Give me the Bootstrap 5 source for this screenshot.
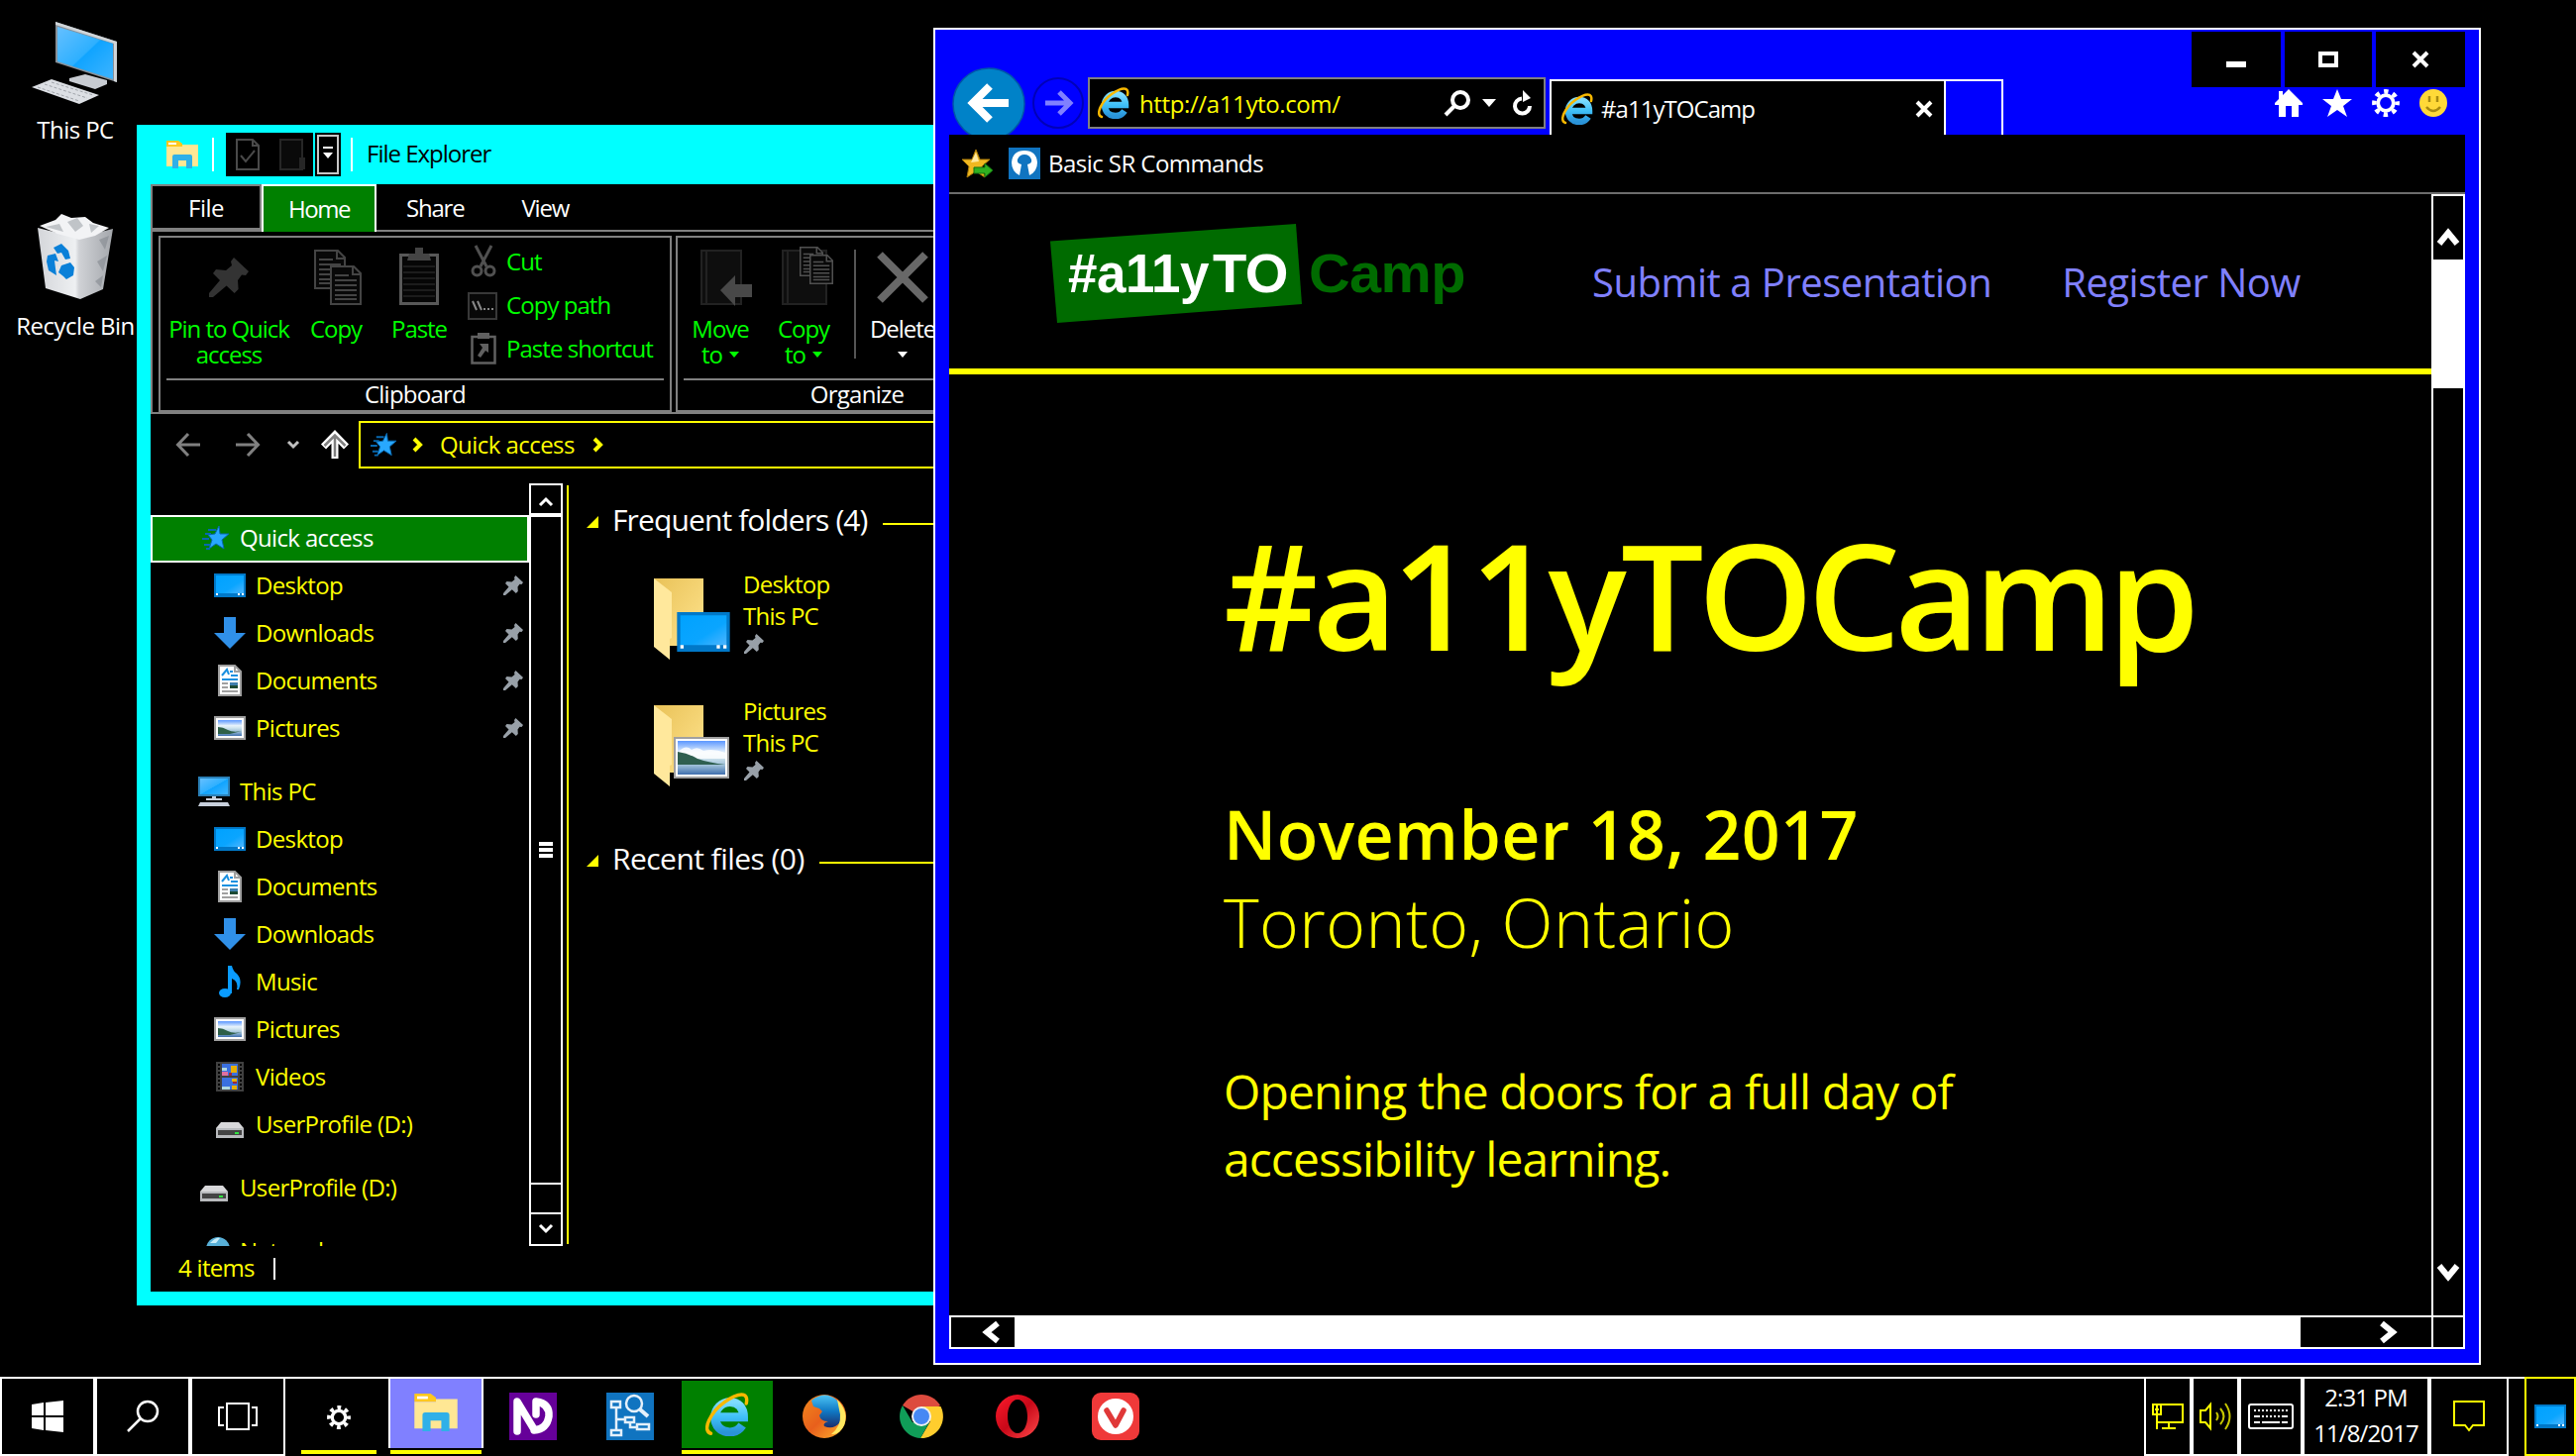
<!DOCTYPE html>
<html lang="en">
<head>
<meta charset="utf-8">
<title>Desktop</title>
<link href="https://cdn.jsdelivr.net/npm/bootstrap@5.3.0/dist/css/bootstrap.min.css" rel="stylesheet">
<style>
body{width:2600px;height:1470px;background:#000;color:#fff;font:24px/26px "Open Sans","Noto Sans",sans-serif;letter-spacing:-.55px;overflow:hidden;position:relative}
svg{display:block;flex:none;overflow:visible}
.ylw{color:#ff0}.lime{color:#0f0}
.shortcut{position:absolute;width:152px;left:0;text-align:center;white-space:nowrap}
.shortcut svg{margin:0 auto}
.win{position:absolute}
#explorer{left:138px;top:126px;width:900px;height:1192px;background:#000;border:14px solid #0ff;border-top:0}
.xtitle{height:60px;background:#0ff;padding-left:16px;color:#000}
.xname{letter-spacing:-1px;padding-bottom:2px}
.vbar{width:2px;height:34px;background:#fff}
.qat{width:88px;height:44px;background:#000;padding-left:10px;gap:20px}
.qatmore{width:26px;height:44px;background:#000;padding:2px}
.qatmore>div{border:2px solid #c8c8c8;height:40px}
.xtabs{height:48px}
.xtab{height:48px;text-align:center;line-height:46px;padding-top:1px}
.xtab.file{width:112px;border:2px solid #808080;border-bottom-width:4px;line-height:41px}
.xtab.home{width:116px;border:2px solid #fff;border-bottom:0;background:#008000;line-height:43px;letter-spacing:-1.5px}
.xtab.rest{flex:1;border-bottom:2px solid #808080;text-align:left;letter-spacing:-1.2px}
.ribbon{height:184px;border-left:2px solid #808080;border-bottom:2px solid #808080;padding:4px 0 0 6px;gap:4px;overflow:hidden;letter-spacing:-1.05px}
.rgroup{height:178px;border:2px solid #808080;padding:8px 6px 0;flex:none}
.rbody{height:136px;border-bottom:2px solid #808080;white-space:nowrap}
.rname{height:30px;line-height:27px;text-align:center;letter-spacing:-.75px}
.rbtn{text-align:center}
.rbtn .pic{height:71px;display:flex;justify-content:center;align-items:flex-start}
.addr{height:62px;padding-left:26px}
.abox{height:48px;width:600px;border:2px solid #ff0;padding-left:10px;line-height:44px}
.xbody{height:770px;margin-top:8px}
.tree{width:382px;padding-top:32px;height:770px;overflow:hidden;white-space:nowrap;letter-spacing:-.65px}
.node{height:48px;padding:0 6px 3px 64px;gap:10px;color:#ff0}
.node.root{padding-left:48px;margin-top:16px}
.node.sel{background:#008000;outline:2px solid #fff;outline-offset:-2px;color:#fff;margin-top:0;padding-left:50px}
.node .txt{flex:1}
.ico{width:32px;display:flex;justify-content:center}
.sbar{width:34px;border:2px solid #fff}
.split{width:2px;height:766px;background:#ff0;margin:2px 0 0 4px}
.xmain{padding:20px 0 0 18px;flex:1}
.ghead{height:34px;font-size:30px;line-height:34px;letter-spacing:-.88px;white-space:nowrap}
.ghead .ln{height:2px;background:#ff0;flex:1}
.fold{padding-left:68px;height:128px;line-height:32px;letter-spacing:-.75px}
.fold>div{margin-top:-2px}
.status{height:38px;padding-left:28px;line-height:44px;letter-spacing:-.7px}
#ie{left:942px;top:28px;width:1562px;height:1350px;background:#00f;border:2px solid #fff}
.iebar{height:106px;padding-left:17px;position:relative;overflow:hidden}
.caps{position:absolute;right:14px;top:2px;gap:4px}
.caps div{height:56px;background:#000;display:flex;align-items:center;justify-content:center}
.tools{position:absolute;right:32px;top:60px;gap:20px}
.urlbox{width:462px;height:52px;background:#000;border:2px solid #808080;margin-top:48px;padding:0 12px 0 8px}
.ietab{height:56px;width:400px;margin-top:50px;background:#000;border:2px solid #fff;border-bottom:0;padding:2px 11px 0 10px;letter-spacing:-.95px}
.newtab{height:56px;width:58px;margin-top:50px;border:2px solid #fff;border-left:0;border-bottom:0}
.iebody{margin:0 14px;width:1530px;height:1226px;background:#000}
.favs{height:60px;border-bottom:2px solid #6d6d6d;padding-left:12px}
.pagecol{width:1496px;height:1132px}
.phead{height:182px;border-bottom:6px solid #ff0;color:#8080ff;font-size:40px;line-height:54px;letter-spacing:-.5px;padding:30px 0 0 100px;white-space:nowrap}
.brand{width:440px;height:100px}
.pmain{padding:142px 0 0 277px;color:#ff0;letter-spacing:0;white-space:nowrap}
.pmain h1{font-size:148px;line-height:160px;font-weight:600;margin:0 0 117px;letter-spacing:-5.8px}
.pmain h2{font-size:68px;line-height:89px;font-weight:600;margin:0;letter-spacing:.45px}
.pmain .city{font-size:68px;line-height:89px;font-weight:300;margin:0 0 93px;letter-spacing:.4px}
.pmain .intro{font-size:48px;line-height:68px;margin:0;letter-spacing:-.9px}
.vs{width:34px;height:1132px;border:2px solid #fff;border-bottom:0}
.hs{height:34px;border:2px solid #fff}
.hs>div,.vs>div{display:flex;align-items:center}
#taskbar{position:absolute;left:0;top:1390px;width:2600px;height:80px;border-top:2px solid #fff}
.tb{height:78px;display:flex;align-items:center;justify-content:center;flex:none;padding-bottom:2px}
.bx{border-bottom:2px solid #fff;padding:0}
.run{flex-direction:column;justify-content:flex-start;padding:0}
.run .face{height:70px;display:flex;align-items:center;justify-content:center;width:100%}
.run .ul{height:4px;background:#ff0;margin-top:2px}
</style>
<script src="https://cdn.jsdelivr.net/npm/bootstrap@5.3.0/dist/js/bootstrap.bundle.min.js"></script>
</head>
<body>
<svg width="0" height="0" style="position:absolute">
<defs>
<linearGradient id="gs" x1="0" y1="0" x2="1" y2="1"><stop offset="0" stop-color="#66c0ff"/><stop offset=".5" stop-color="#2eb0ff"/><stop offset=".52" stop-color="#10a4ff"/><stop offset="1" stop-color="#3eb4ff"/></linearGradient>
<linearGradient id="gd" x1="0" y1="0" x2="1" y2="1"><stop offset="0" stop-color="#00a2ff"/><stop offset=".6" stop-color="#0aa5ff"/><stop offset="1" stop-color="#4db5ff"/></linearGradient>
<linearGradient id="gf" x1="0" y1="0" x2="1" y2="1"><stop offset="0" stop-color="#e9c258"/><stop offset="1" stop-color="#ffe48e"/></linearGradient>
<linearGradient id="gl" x1="0" y1="0" x2="0" y2="1"><stop offset="0" stop-color="#5b97ff"/><stop offset=".35" stop-color="#e8f3fb"/><stop offset=".5" stop-color="#cfe4ee"/><stop offset=".72" stop-color="#9fc0d8"/><stop offset="1" stop-color="#3f6fae"/></linearGradient>
<linearGradient id="ge" x1="0" y1="0" x2="0" y2="1"><stop offset="0" stop-color="#7fdcff"/><stop offset=".5" stop-color="#3fc0f8"/><stop offset="1" stop-color="#2a93d8"/></linearGradient>
<linearGradient id="gb" x1="0" y1="0" x2="1" y2="0"><stop offset="0" stop-color="#d4d6da"/><stop offset=".5" stop-color="#eef0f2"/><stop offset=".55" stop-color="#d0d2d6"/><stop offset="1" stop-color="#a4a7ac"/></linearGradient>
<linearGradient id="go" x1="0" y1="0" x2="1" y2="1"><stop offset="0" stop-color="#ff1b2d"/><stop offset=".5" stop-color="#c80818"/><stop offset="1" stop-color="#ff4b4b"/></linearGradient>
<linearGradient id="gfx" x1="0" y1="0" x2="1" y2="1"><stop offset="0" stop-color="#f28a1c"/><stop offset=".5" stop-color="#e8601c"/><stop offset="1" stop-color="#ffb52e"/></linearGradient>
<linearGradient id="gfb" x1="0" y1="0" x2="0" y2="1"><stop offset="0" stop-color="#4cc4f4"/><stop offset=".5" stop-color="#0f78c4"/><stop offset="1" stop-color="#1b2c6b"/></linearGradient>
</defs>
<symbol id="pin" viewBox="0 0 20 20"><path d="M12.500 0 20 7l-1.500 2-2-.3-2 2.800.3 4.500-2 2-4-3.800L2 20H0v-2l5.500-6.500L2 8l1.500-2 5 .5 3-2.500-.5-2z"/></symbol>
<symbol id="desk" viewBox="0 0 32 24"><path fill="#0078c8" d="M0 0h32v24H0z"/><path fill="url(#gd)" d="M2 2h28v18H2z"/><path fill="#fff" d="M2 20h2v2H2zM24 20h2v2h-2zM28 20h2v2h-2z"/></symbol>
<symbol id="down" viewBox="0 0 32 32"><path fill="#3090e8" d="M10 0h12v16h10L16 32 0 16h10z"/></symbol>
<symbol id="doc" viewBox="0 0 24 32"><path fill="#fff" stroke="#a0a0a0" stroke-width="2" d="M1 1h16l6 6v24H1z"/><path fill="none" stroke="#a0a0a0" stroke-width="2" d="M17 1v6h6"/><path stroke="#1a90e0" stroke-width="2" fill="none" d="M4 11 9 5l2 5M12 7h3M13 11h7M4 15h16"/><path stroke="#a0a0a0" stroke-width="2" d="M4 19h6M4 23h6M4 27h16"/><path fill="#3f7fae" d="M12 18h8v3h-8z"/><path fill="#1c4a34" d="M12 21h8v3h-8z"/></symbol>
<symbol id="pict" viewBox="0 0 56 42"><path fill="#a0a0a0" d="M0 0h56v42H0z"/><path fill="#fff" d="M2 2h52v38H2z"/><path fill="url(#gl)" d="M4 4h48v34H4z"/><path fill="#fff" opacity=".8" d="M4 16q8-9 14-3 6-4 12 1 10-3 22 2v6H4z"/><path fill="#2f5f50" d="M4 15q10 1 20 7 12 4 28 6H4z"/></symbol>
<symbol id="picts" viewBox="0 0 32 24"><path fill="#a0a0a0" d="M0 0h32v24H0z"/><path fill="#fff" d="M2 2h28v20H2z"/><path fill="url(#gl)" d="M4 4h24v16H4z"/><path fill="#2f6048" d="M4 11q5 0 10 3t14 1l-12 3H4z"/></symbol>
<symbol id="pcs" viewBox="0 0 32 30"><path fill="#2a80b8" d="M0 0h32v20H0z"/><path fill="url(#gs)" d="M2 2h28v16H2z"/><path fill="#c8d0dc" d="M14 20h4v2h6v2H8v-2h6zM2 26h28l2 4H0z"/></symbol>
<symbol id="music" viewBox="0 0 22 32"><ellipse cx="6" cy="27.500" rx="6" ry="4.500" fill="#0a9cff"/><path fill="#0a9cff" d="M9 0h4q1 5 5 8 6 6 2 16h-2q2-8-5-11v15H9z"/></symbol>
<symbol id="video" viewBox="0 0 28 30"><path fill="#404040" d="M0 0h28v30H0z"/><path fill="#3a70e0" d="M6 2h16v12H6zM6 16h16v12H6z"/><path stroke="#000" stroke-width="2" stroke-dasharray="2 2" d="M3 2v28M25 2v28"/><path fill="#e8b000" d="M15 4h6v7h-6zM16 17h5v3h-5zM16 24h5v4h-5z"/><path fill="#e070a0" d="M6 10h6v4H6z"/><path fill="#b0d8e0" d="M6 6h5v3H6zM6 25h8v3H6z"/><path fill="#a02838" d="M17 20h4v2h-4zM13 11h3v3h-3z"/></symbol>
<symbol id="drive" viewBox="0 0 28 16"><path fill="#d8d8da" d="M5 0h18l5 6H0z"/><path fill="#b8babd" d="M0 6h28v10H0z"/><path fill="#444" d="M2 8h24v5H2z"/><path fill="#30e040" d="M19 10h4v2h-4z"/></symbol>
<symbol id="qstar" viewBox="0 0 28 24"><path fill="#28a8ff" stroke="#0868b0" stroke-width="1" d="m17 0 1 8h9l-7 6 2 9-8-5-7 5 3-9-4-5 7-1z"/><path stroke="#0868b0" stroke-width="2" d="M6 4h8M3 8h6M0 13h7M2 19h6M4 23h4"/></symbol>
<symbol id="files" viewBox="0 0 32 28"><path fill="#ffc81e" d="M0 0h12l4 3v3H0z"/><path fill="#ffe794" d="M0 6h16V4h16v22H0z"/><path fill="#fff" d="M2 2h8v2H2z"/><path fill="#2fb0e8" d="M6 28V16q0-2 2-2h16q2 0 2 2v12h-6v-8h-8v8z"/></symbol>
<symbol id="iee" viewBox="0 0 32 32"><path fill="none" stroke="url(#ge)" stroke-width="6.500" d="M8 18h20c0-7-4-11-10-11S7 12 7 18s4 11 11 11c4 0 7-2 9-5"/><path fill="none" stroke="#f8b800" stroke-width="2.500" stroke-linecap="round" d="M4 30C-3 28 4 14 14 7S32-1 30 8"/></symbol>
<symbol id="gear" viewBox="0 0 28 28"><g fill="none" stroke="currentColor"><circle cx="14" cy="14" r="7.800" stroke-width="3.800"/><circle cx="14" cy="14" r="11.600" stroke-width="4.600" stroke-dasharray="4.400 4.710" stroke-dashoffset="2.200"/></g></symbol>
<symbol id="sheet" viewBox="0 0 32 40"><path fill="#080808" stroke="currentColor" stroke-width="2" d="M1 1h23l7 7v31H1z"/><path fill="none" stroke="currentColor" stroke-width="2" d="M23 1v8h8M5 10h14M5 15h22M5 20h22M5 25h22M5 30h22M5 34h22"/></symbol>
<symbol id="foldc" viewBox="0 0 80 82"><path fill="url(#gf)" d="M0 0h50v68H10z"/><path fill="#ffe89c" d="M0 0 18 14v46l-2 1v21L0 69z"/></symbol>
</svg>

<div class="shortcut" style="top:22px"><svg width="88" height="86" viewBox="0 0 88 86"><path fill="#889098" d="M24 0 86 20v41L24 41z"/><path fill="#cfd4d8" d="m24 0 62 20v41l-3-1V22L24 3z"/><path fill="url(#gs)" d="M26 5 82 22v36L26 40z"/><path fill="#c8ccd2" d="m38 57 16-4 22 6v4l-12 5-26-8z"/><path fill="#dcdfe4" d="m0 66 20-8 48 16-20 9z"/><path fill="none" stroke="#a0a4aa" stroke-dasharray="3 2" d="m6 66 42 14M13 63l43 14M20 61l42 13"/></svg><div style="margin-top:10px">This PC</div></div>
<div class="shortcut" style="top:216px"><svg width="76" height="86" viewBox="0 0 76 86"><path fill="url(#gb)" d="M0 14 40 24 76 15 66 76 43 86 8 75z"/><path fill="#f2f3f5" d="M2 12 18 6 24 0l10 4 14-1 8 6 16 5-14 8-16 4L20 20z"/><path fill="#c0c4c8" d="m30 8 10-4 6 8-8 6zM52 10l10 2-8 7zM8 13l14-3 4 8z"/><path fill="#84898f" opacity=".6" d="m62 26 10-4-4 14zM60 48l10-6-4 16zM58 68l8-6-2 12z"/><path fill="#0a80d8" d="m16 34 8-4 7 7 2 8-5 1-4-7-4 1zM10 42l8-2 3 8-4-1 1 8 1 7-8-5-2-9zM24 52l9-3 4 5-1 8-7 4-3-3-5-4z"/></svg><div style="margin-top:14px">Recycle Bin</div></div>

<div id="explorer" class="win">
 <div class="xtitle d-flex align-items-center">
  <svg width="32" height="28"><use href="#files"/></svg><div class="vbar" style="margin:0 12px 0 14px"></div>
  <div class="qat d-flex align-items-center"><svg width="24" height="32" fill="none" stroke="#4a4a4a" stroke-width="2"><path d="M1 1h16l6 6v24H1zM17 1v6h6M5 17l5 6 9-11"/></svg><svg width="26" height="32" fill="#0a0a0a" stroke="#262626" stroke-width="2"><path d="M1 1h22v30H1zM21 31V20h4v11"/></svg></div>
  <div class="qatmore" style="margin-left:2px"><div><svg width="22" height="36" fill="#fff"><path d="M4 10h10v2H4zM4 16h10l-5 6z"/></svg></div></div>
  <div class="vbar" style="margin:0 14px 0 10px"></div><span class="xname">File Explorer</span>
 </div>
 <div class="xtabs d-flex"><div class="xtab file">File</div><div class="xtab home">Home</div><div class="xtab rest d-flex"><span style="margin-left:30px">Share</span><span style="margin-left:58px">View</span></div></div>
 <div class="ribbon d-flex">
  <div class="rgroup" style="width:518px">
   <div class="rbody d-flex lime">
    <div class="rbtn" style="width:126px"><div class="pic" style="padding-top:12px"><svg width="40" height="40" fill="#333"><use href="#pin"/></svg></div>Pin to Quick<br>access</div>
    <div class="rbtn" style="width:90px"><div class="pic" style="padding:4px 0 0 4px"><svg width="48" height="56" color="#444"><use href="#sheet" width="32" height="40"/><use href="#sheet" x="16" y="16" width="32" height="40"/></svg></div>Copy</div>
    <div class="rbtn" style="width:78px"><div class="pic" style="padding-top:2px"><svg width="40" height="58"><path fill="#060606" stroke="#585858" stroke-width="3" d="M1.500 7.500h37v49h-37z"/><path fill="#444" d="M10 6h6V0h8v6h6l2 7H8z"/><path stroke="#1c1c1c" stroke-width="2" d="M4 19h32M4 25h32M4 31h32M4 37h32M4 43h32M4 49h32"/></svg></div>Paste</div>
    <div class="d-flex flex-column" style="padding-left:13px;letter-spacing:-.95px">
     <div class="d-flex align-items-center" style="height:32px;gap:10px"><svg width="26" height="32" fill="none" stroke="#505050" stroke-width="3"><path d="M5 0 16 21M21 0 10 21"/><circle cx="6.500" cy="25.500" r="4.500"/><circle cx="19.500" cy="25.500" r="4.500"/></svg><span style="padding-bottom:1px">Cut</span></div>
     <div class="d-flex align-items-center" style="height:32px;gap:9px;margin:12px 0 12px -3px"><svg width="30" height="28" viewBox="0 -1 30 28"><path fill="#080808" stroke="#383838" stroke-width="2" d="M1 1h28v26H1z"/><path fill="none" stroke="#888" stroke-width="2" d="m5 9 4 9M10 9l4 9M16 17h2M20 17h2M24 17h2"/></svg><span style="padding-bottom:1px">Copy path</span></div>
     <div class="d-flex align-items-center" style="height:32px;gap:10px"><svg width="26" height="32"><path fill="none" stroke="#606060" stroke-width="2.500" d="M1.500 4h23v26.500h-23z"/><path fill="#606060" d="M7 0h12v6H7zM9 11h9v9l-3-2-5 7-3-2 5-8z"/></svg><span style="padding-bottom:1px">Paste shortcut</span></div>
    </div>
   </div>
   <div class="rname">Clipboard</div>
  </div>
  <div class="rgroup" style="width:450px">
   <div class="rbody d-flex lime">
    <div class="rbtn" style="width:74px"><div class="pic" style="padding:4px 0 0 11px"><svg width="52" height="56"><path fill="#0e0e0e" stroke="#222" stroke-width="2" d="M1 1h40v54H1zM6 1v54"/><path fill="#484848" d="m20 41 15-15v9h17v13H35v9z"/></svg></div>Move<br>to<svg class="d-inline-block" width="10" height="6" style="margin:0 0 6px 7px" fill="#0f0"><path d="M0 0h10L5 6z"/></svg></div>
    <div class="rbtn" style="width:94px"><div class="pic" style="padding-left:7px"><svg width="52" height="60" color="#505050"><path fill="#0e0e0e" stroke="#222" stroke-width="2" d="M1 5h44v54H1zM6 5v54"/><use href="#sheet" x="18" y="0" width="24" height="32"/><use href="#sheet" x="28" y="8" width="24" height="32"/></svg></div>Copy<br>to<svg class="d-inline-block" width="10" height="6" style="margin:0 0 6px 7px" fill="#0f0"><path d="M0 0h10L5 6z"/></svg></div>
    <div style="width:2px;height:110px;background:#555;margin:4px 14px 0 4px"></div>
    <div class="rbtn text-white" style="width:66px"><div class="pic" style="padding-top:6px"><svg width="52" height="52" stroke="#686868" stroke-width="8"><path d="m3 3 46 46M49 3 3 49"/></svg></div>Delete<br><svg width="10" height="6" style="margin:10px auto 0" fill="#fff"><path d="M0 0h10L5 6z"/></svg></div>
   </div>
   <div class="rname" style="width:350px">Organize</div>
  </div>
 </div>
 <div class="addr d-flex align-items-center">
  <svg width="24" height="24" fill="none" stroke="#808080" stroke-width="3"><path d="M24 12H2M12 1 1.500 12 12 23"/></svg>
  <svg width="24" height="24" fill="none" stroke="#808080" stroke-width="3" style="margin-left:36px"><path d="M0 12h22M12 1l10.500 11L12 23"/></svg>
  <svg width="12" height="8" fill="none" stroke="#c0c0c0" stroke-width="3" style="margin:0 2px 0 28px"><path d="m1 1 5 5 5-5"/></svg>
  <svg width="28" height="28" fill="none" style="margin-left:20px"><path stroke="#fff" stroke-width="7" d="M14 28V4M2.500 16 14 4l11.500 12"/><path stroke="#808080" stroke-width="2.500" d="M14 26V5M3.500 15 14 4.500 24.500 15"/></svg>
  <div class="abox d-flex align-items-center ylw" style="margin-left:10px"><svg width="27" height="24"><use href="#qstar"/></svg><svg width="9" height="14" fill="none" stroke="#ff0" stroke-width="4" style="margin-left:16px"><path d="m1 1 6 6-6 6"/></svg><span style="margin-left:18px">Quick access</span><svg width="9" height="14" fill="none" stroke="#ff0" stroke-width="4" style="margin-left:19px"><path d="m1 1 6 6-6 6"/></svg></div>
 </div>
 <div class="xbody d-flex">
  <div class="tree">
   <div class="node root sel d-flex align-items-center"><span class="ico"><svg width="28" height="24"><use href="#qstar"/></svg></span><span class="txt" style="margin-left:-2px">Quick access</span></div>
   <div class="node d-flex align-items-center"><span class="ico"><svg width="32" height="24"><use href="#desk"/></svg></span><span class="txt">Desktop</span><svg width="20" height="20" fill="#98a0a8"><use href="#pin"/></svg></div>
   <div class="node d-flex align-items-center"><span class="ico"><svg width="32" height="32"><use href="#down"/></svg></span><span class="txt">Downloads</span><svg width="20" height="20" fill="#98a0a8"><use href="#pin"/></svg></div>
   <div class="node d-flex align-items-center"><span class="ico"><svg width="24" height="32"><use href="#doc"/></svg></span><span class="txt">Documents</span><svg width="20" height="20" fill="#98a0a8"><use href="#pin"/></svg></div>
   <div class="node d-flex align-items-center"><span class="ico"><svg width="32" height="24"><use href="#picts"/></svg></span><span class="txt">Pictures</span><svg width="20" height="20" fill="#98a0a8"><use href="#pin"/></svg></div>
   <div class="node root d-flex align-items-center"><span class="ico"><svg width="32" height="30"><use href="#pcs"/></svg></span><span class="txt">This PC</span></div>
   <div class="node d-flex align-items-center"><span class="ico"><svg width="32" height="24"><use href="#desk"/></svg></span><span class="txt">Desktop</span></div>
   <div class="node d-flex align-items-center"><span class="ico"><svg width="24" height="32"><use href="#doc"/></svg></span><span class="txt">Documents</span></div>
   <div class="node d-flex align-items-center"><span class="ico"><svg width="32" height="32"><use href="#down"/></svg></span><span class="txt">Downloads</span></div>
   <div class="node d-flex align-items-center"><span class="ico"><svg width="22" height="32"><use href="#music"/></svg></span><span class="txt">Music</span></div>
   <div class="node d-flex align-items-center"><span class="ico"><svg width="32" height="24"><use href="#picts"/></svg></span><span class="txt">Pictures</span></div>
   <div class="node d-flex align-items-center"><span class="ico"><svg width="28" height="30"><use href="#video"/></svg></span><span class="txt">Videos</span></div>
   <div class="node d-flex align-items-center"><span class="ico pt-2 mt-1"><svg width="28" height="16"><use href="#drive"/></svg></span><span class="txt">UserProfile (D:)</span></div>
   <div class="node root d-flex align-items-center"><span class="ico pt-2 mt-1"><svg width="28" height="16"><use href="#drive"/></svg></span><span class="txt">UserProfile (D:)</span></div>
   <div class="node root d-flex align-items-center"><span class="ico ps-2"><svg width="24" height="28"><circle cx="12" cy="12" r="12" fill="#58b0d8"/><path fill="#c8ecf8" d="M4 6q6-6 10-5l-4 5z"/></svg></span><span class="txt">Network</span></div>
  </div>
  <div class="sbar"><div style="height:32px;border-bottom:4px solid #fff;padding:11px 8px 0"><svg width="14" height="10" fill="none" stroke="#fff" stroke-width="3"><path d="m1 9 6-6 6 6"/></svg></div><div style="height:672px;padding:328px 8px 0"><svg width="14" height="16" fill="#fff"><path d="M0 0h14v4H0zM0 6h14v4H0zM0 12h14v4H0z"/></svg></div><div style="height:32px;border:solid #fff;border-width:2px 0"></div><div style="padding:10px 8px"><svg width="14" height="10" fill="none" stroke="#fff" stroke-width="3"><path d="m1 1 6 6 6-6"/></svg></div></div>
  <div class="split"></div>
  <div class="xmain">
   <div class="ghead d-flex align-items-center"><svg width="12" height="12" fill="#ff0" style="margin:4px 14px 0 0"><path d="M12 0v12H0z"/></svg><span>Frequent folders (4)</span><div class="ln" style="margin:7px 0 0 15px"></div></div>
   <div style="padding-top:34px">
    <div class="fold d-flex"><svg width="78" height="82" style="margin:8px 12px 0 0"><use href="#foldc" width="80" height="82"/><use href="#desk" x="22" y="34" width="56" height="40"/></svg><div class="ylw">Desktop<br>This PC<svg width="20" height="20" fill="#98a0a8" style="margin:2px 0 0 1px"><use href="#pin"/></svg></div></div>
    <div class="fold d-flex"><svg width="78" height="82" style="margin:8px 12px 0 0"><use href="#foldc" width="80" height="82"/><use href="#pict" x="20" y="32" width="56" height="42"/></svg><div class="ylw">Pictures<br>This PC<svg width="20" height="20" fill="#98a0a8" style="margin:2px 0 0 1px"><use href="#pin"/></svg></div></div>
   </div>
   <div class="ghead d-flex align-items-center" style="margin-top:18px;letter-spacing:-.55px"><svg width="12" height="12" fill="#ff0" style="margin:4px 14px 0 0"><path d="M12 0v12H0z"/></svg><span>Recent files (0)</span><div class="ln" style="margin:7px 0 0 15px"></div></div>
  </div>
 </div>
 <div class="status ylw d-flex"><span>4 items</span><div style="width:2px;height:22px;background:#fff;margin:12px 0 0 19px"></div></div>
</div>

<div id="ie" class="win">
 <div class="iebar d-flex">
  <svg width="74" height="74" style="margin-top:38px"><circle cx="37" cy="37" r="36" fill="#0082c8" stroke="#0058a8" stroke-width="1.500"/><path fill="none" stroke="#fff" stroke-width="8" d="M57 36H20M38 19 21 36l17 17"/></svg>
  <svg width="52" height="52" style="margin:48px 4px 0 7px"><circle cx="26" cy="26" r="25" fill="none" stroke="#0000b8" stroke-width="2"/><path fill="none" stroke="#8080ff" stroke-width="5" d="M13 26h24M27 15l11 11-11 11"/></svg>
  <div class="urlbox d-flex align-items-center"><svg width="32" height="32"><use href="#iee"/></svg><span class="ylw" style="margin:1px auto 0 10px;letter-spacing:-.38px">http://a11yto.com/</span>
   <svg width="26" height="26" fill="none" stroke="#fff" stroke-width="4"><circle cx="16" cy="10" r="8"/><path d="M10 16 1 25"/></svg><svg width="14" height="8" fill="#fff" style="margin:0 16px 0 12px"><path d="M0 0h14L7 8z"/></svg><svg width="20" height="26" fill="none" stroke="#fff" stroke-width="4"><path d="M10 8.500a7.500 7.500 0 1 0 8 7.500"/><path fill="#fff" stroke="none" d="m11 0 8 8-8 4z"/></svg></div>
  <div class="ietab d-flex align-items-center" style="margin-left:4px"><svg width="32" height="32"><use href="#iee"/></svg><span style="margin:0 auto 0 8px">#a11yTOCamp</span><svg width="18" height="16" stroke="#fff" stroke-width="4"><path d="m2 1 14 14M16 1 2 15"/></svg></div><div class="newtab"></div>
  <div class="caps d-flex"><div style="width:90px"><svg width="20" height="16" fill="#fff"><path d="M0 10h20v6H0z"/></svg></div><div style="width:88px"><svg width="20" height="16" fill="none" stroke="#fff" stroke-width="4"><path d="M2 2h16v12H2z"/></svg></div><div style="width:90px"><svg width="18" height="16" stroke="#fff" stroke-width="4"><path d="m2 1 14 14M16 1 2 15"/></svg></div></div>
  <div class="tools d-flex"><svg width="28" height="28" fill="#fff"><path d="M14 0 28 14v2h-4v12h-7V17h-6v11H4V16H0v-2L4 10V2h4v4z"/></svg><svg width="30" height="28" fill="#fff"><path d="m15 0 4 10h11l-9 7 4 11-10-7-10 7 4-11-9-7h11z"/></svg><svg width="28" height="28" color="#fff"><use href="#gear"/></svg><svg width="28" height="28"><circle cx="14" cy="14" r="14" fill="#ffd938"/><path fill="none" stroke="#a88a10" stroke-width="2.500" d="M10 7v6M18 7v6M7 18q7 8 14 0"/></svg></div>
 </div>
 <div class="iebody">
  <div class="favs d-flex align-items-center"><svg width="32" height="32"><path fill="#f0b820" stroke="#a87808" d="m15 2 4 10h10l-8 7 3 11-9-6-9 6 2-11-7-7h10z"/><path fill="#ffe9a0" d="m15 5 3 9-8 1z"/><path fill="#30b020" stroke="#107010" d="M13 20h11v-4l8 7-8 7v-4H13z"/></svg><svg width="32" height="32" style="margin:0 8px 0 16px"><path fill="#1074c0" d="M0 0h32v32H0z"/><path fill="#fff" d="M11 28Q3 24 3 15 4 3 16 3t13 12q0 9-8 13l-2-11q5-1 4-5-2-5-7-5t-7 5q-1 4 4 5z"/></svg><span class="favname">Basic SR Commands</span></div>
  <div class="d-flex">
   <div class="pagecol">
    <div class="phead d-flex"><svg class="brand" width="440" height="100" viewBox="0 0 440 100"><path fill="#006b00" d="M2 17.500 250 0l6 81L9 100z"/><g font-family="Liberation Sans" font-weight="700" font-size="55" fill="#fff"><text x="20" y="69" textLength="142" lengthAdjust="spacingAndGlyphs">#a11y</text><text x="166" y="69" textLength="76" lengthAdjust="spacingAndGlyphs">TO</text><text x="263" y="69" textLength="158" lengthAdjust="spacingAndGlyphs" fill="#006b00">Camp</text></g></svg><span style="margin:32px 0 0 109px">Submit a Presentation</span><span style="margin:32px 0 0 71px">Register Now</span></div>
    <div class="pmain"><h1>#a11yTOCamp</h1><h2>November 18, 2017</h2><p class="city">Toronto, Ontario</p><p class="intro">Opening the doors for a full day of<br>accessibility learning.</p></div>
   </div>
   <div class="vs"><div style="height:64px;justify-content:center;padding-top:18px"><svg width="22" height="18" fill="none" stroke="#fff" stroke-width="6"><path d="M2 16 11 5l9 11"/></svg></div><div style="height:130px;background:#fff"></div><div style="height:932px;align-items:flex-end;justify-content:center;padding-bottom:30px"><svg width="22" height="18" fill="none" stroke="#fff" stroke-width="6"><path d="m2 2 9 11 9-11"/></svg></div></div>
  </div>
  <div class="hs d-flex"><div style="width:64px;padding-left:31px"><svg width="18" height="22" fill="none" stroke="#fff" stroke-width="6"><path d="M16 2 5 11l11 9"/></svg></div><div style="width:1298px;background:#fff"></div><div style="width:134px;border-right:2px solid #fff;padding-left:80px"><svg width="18" height="22" fill="none" stroke="#fff" stroke-width="6"><path d="m2 2 11 9-11 9"/></svg></div></div>
 </div>
</div>

<div id="taskbar" class="d-flex">
 <div class="tb bx" style="width:96px;border-left:2px solid #fff;border-right:2px solid #fff"><svg width="32" height="32" fill="#fff"><path d="m0 4 12-2v13H0zM14 2 32 0v15H14zM0 17h12v13L0 28zM14 17h18v15l-18-2z"/></svg></div>
 <div class="tb bx" style="width:96px;border-left:2px solid #fff;border-right:2px solid #fff"><svg width="32" height="32" fill="none" stroke="#fff" stroke-width="2.500"><circle cx="21" cy="11" r="10"/><path d="M14 18 1 31"/></svg></div>
 <div class="tb bx" style="width:96px;border-left:2px solid #fff;border-right:2px solid #fff"><svg width="40" height="28" fill="none" stroke="#fff" stroke-width="2"><path d="M9 1h22v26H9zM6 5H1v18h5M34 5h5v18h-5"/></svg></div>
 <div class="tb run" style="width:104px;padding-left:4px"><div class="face" style="padding-top:8px"><svg width="24" height="24" color="#fff"><use href="#gear"/></svg></div><div class="ul" style="width:76px"></div></div>
 <div class="tb run" style="width:96px"><div class="face" style="background:#8080ff;border:solid #fff;border-width:0 2px;padding-bottom:2px"><svg width="44" height="38"><use href="#files"/></svg></div><div class="ul" style="width:92px"></div></div>
 <div class="tb" style="width:48px;margin-left:26px"><svg width="48" height="48"><path fill="#660099" d="M0 0h48v48H0z"/><path fill="none" stroke="#fff" stroke-width="7.500" stroke-linejoin="round" stroke-linecap="round" d="M8 39V9l17 28M27 9v13M27 9q14 2 13 15-2 13-15 14"/></svg></div>
 <div class="tb" style="width:48px;margin-left:50px"><svg width="48" height="48"><path fill="#1074c0" d="M0 0h48v48H0z"/><g fill="none" stroke="#e4f0fa" stroke-width="2.500"><path d="M5 9h9v6H5zM5 38h10v5H5zM19 25h9v5h-9zM31 32h12v5H31zM10 15v23M10 27h9M24 30v5h7"/><circle cx="28" cy="11" r="8"/><path stroke-width="4" d="m34 17 8 7"/></g></svg></div>
 <div class="tb run" style="width:92px;margin-left:28px"><div class="face" style="background:#008000;border-top:2px solid #000"><svg width="44" height="44"><use href="#iee"/></svg></div><div class="ul" style="width:92px"></div></div>
 <div class="tb" style="width:46px;margin-left:29px"><svg width="46" height="46"><circle cx="23" cy="23" r="22" fill="url(#gfx)"/><path fill="url(#gfb)" d="M10 7Q24-4 36 7q9 10 3 22-7 8-16 4-2-3 4-5-8 0-9-6l3-4-3-3-6-2z"/><path fill="#ffe860" d="M36 6q12 12 7 26-5 10-13 9 10-8 9-20z"/></svg></div>
 <div class="tb" style="width:44px;margin-left:53px"><svg width="44" height="44" viewBox="0 0 44 44"><path fill="#dd4b3e" d="M22 22 3 11A22 22 0 0 1 41 11z"/><path fill="#ffcd2e" d="M22 12h19.500A22 22 0 0 1 21 44l10-17z"/><path fill="#109d58" d="M3 11A22 22 0 0 0 21 44l9-16-17 0z"/><circle cx="22" cy="22" r="10" fill="#f0f0f0"/><circle cx="22" cy="22" r="8" fill="#4688f4"/></svg></div>
 <div class="tb" style="width:44px;margin-left:53px"><svg width="44" height="44" viewBox="0 0 44 44"><path fill="url(#go)" fill-rule="evenodd" d="M22 0a22 22 0 1 0 0 44 22 22 0 1 0 0-44zm0 5c6 0 10 8 10 17s-4 17-10 17-10-8-10-17S16 5 22 5z"/></svg></div>
 <div class="tb" style="width:48px;margin-left:53px"><svg width="48" height="48"><rect width="48" height="48" rx="9" fill="#ef3939"/><circle cx="24" cy="24" r="18" fill="#fff"/><path fill="none" stroke="#e03838" stroke-width="5.500" stroke-linecap="round" stroke-linejoin="round" d="m15 18 9 15 8-15"/></svg></div>
 <div class="tb bx ms-auto" style="width:48px;border-left:2px solid #fff;border-right:2px solid #fff"><svg width="32" height="26" fill="none" stroke="#ff0" stroke-width="2"><path d="M11 1h20v18H5V1h6M1 1h8v10H1zM3 6h4M5 11v15M17 19v6M10 25h14"/></svg></div>
 <div class="tb bx" style="width:48px;border-left:2px solid #fff;border-right:2px solid #fff"><svg width="32" height="28" fill="none" stroke="#ff0" stroke-width="2"><path d="M1 8h5l5-6v24l-5-6H1z"/><path d="M17 10q3 4 0 8M21 6q7 8 0 16M26 1q9 13 0 26" stroke="#c8c800"/></svg></div>
 <div class="tb bx" style="width:64px;border-left:2px solid #fff;border-right:2px solid #fff"><svg width="46" height="26" fill="none" stroke="#fff" stroke-width="2"><rect x="1" y="1" width="44" height="24" rx="2"/><path stroke-dasharray="2 2" d="M6 7h34"/><path stroke-dasharray="6 2 2 2 2 2 2 2 2 2 2 2 6" d="M6 13h34"/><path d="M6 19h6M14 19h18M34 19h6"/></svg></div>
 <div class="tb bx flex-column" style="width:128px;border-left:2px solid #fff;border-right:2px solid #fff;line-height:36px;padding-bottom:2px;letter-spacing:-.9px"><span>2:31 PM</span><span>11/8/2017</span></div>
 <div class="tb bx" style="width:80px;border-left:2px solid #fff;border-right:2px solid #fff"><svg width="32" height="32" fill="none" stroke="#ff0" stroke-width="2"><path d="M1 1h30v24H20l-4 5-4-5H1z"/></svg></div>
 <div class="tb" style="width:52px;height:80px;margin:-2px 0 0 16px;border:2px solid #ff0;padding:0"><svg width="32" height="24"><use href="#desk"/></svg></div>
</div>
</body>
</html>
